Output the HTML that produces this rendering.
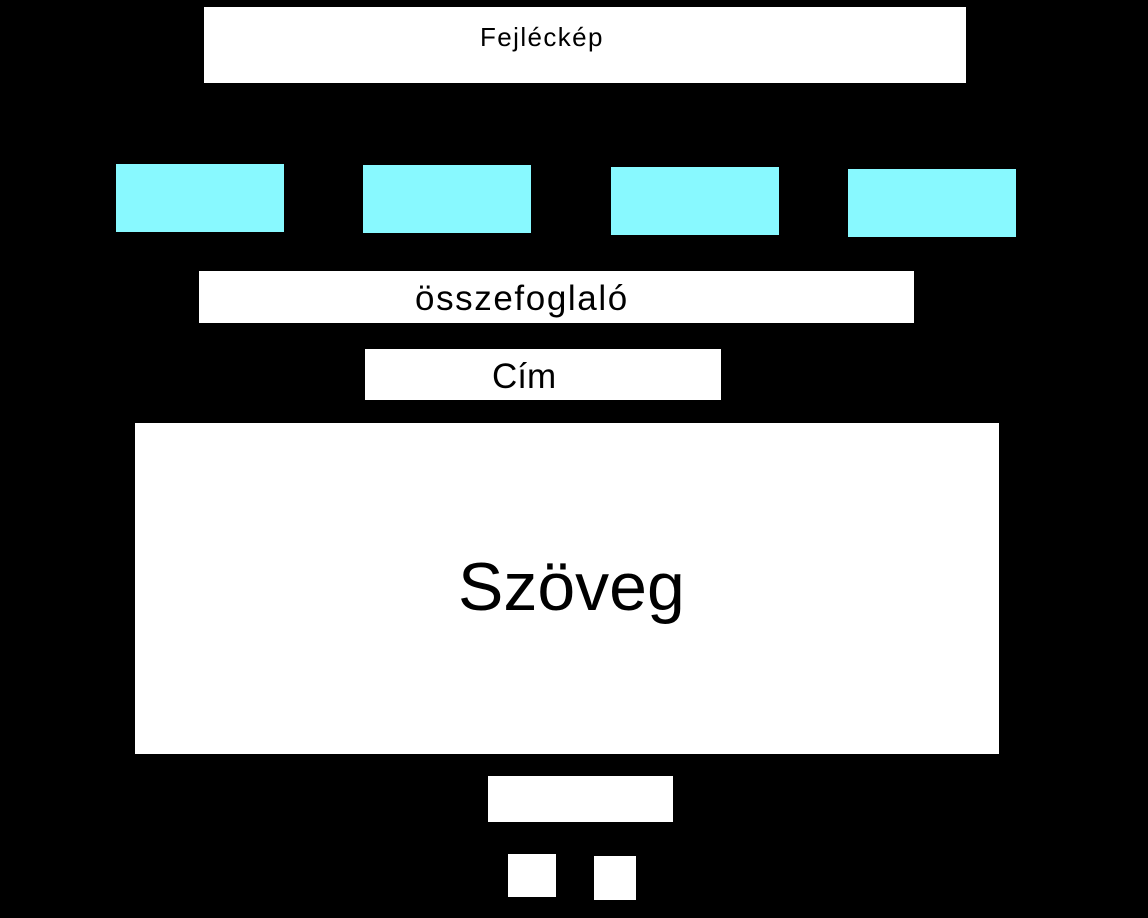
<!DOCTYPE html>
<html><head><meta charset="utf-8"><style>
html,body{margin:0;padding:0;background:#000;width:1148px;height:918px;overflow:hidden;position:relative;font-family:"Liberation Sans","DejaVu Sans",sans-serif}
div{position:absolute;background:#fff}
.c{background:#88f9ff}
span{position:absolute;color:#000;white-space:nowrap;line-height:1}
</style></head><body>
<div style="left:204px;top:7px;width:762px;height:76px"></div>
<span style="left:480px;top:24px;font-size:26px;letter-spacing:1.4px">Fejléckép</span>
<div class="c" style="left:116px;top:164px;width:168px;height:68px"></div>
<div class="c" style="left:363px;top:165px;width:168px;height:68px"></div>
<div class="c" style="left:611px;top:167px;width:168px;height:68px"></div>
<div class="c" style="left:848px;top:169px;width:168px;height:68px"></div>
<div style="left:199px;top:271px;width:715px;height:52px"></div>
<span style="left:415px;top:281px;font-size:35px;letter-spacing:1.6px">összefoglaló</span>
<div style="left:365px;top:349px;width:356px;height:51px"></div>
<span style="left:492px;top:359px;font-size:35px">Cím</span>
<div style="left:135px;top:423px;width:864px;height:331px"></div>
<span style="left:458px;top:553px;font-size:68px">Szöveg</span>
<div style="left:488px;top:776px;width:185px;height:46px"></div>
<div style="left:508px;top:854px;width:48px;height:43px"></div>
<div style="left:594px;top:856px;width:42px;height:44px"></div>
</body></html>
